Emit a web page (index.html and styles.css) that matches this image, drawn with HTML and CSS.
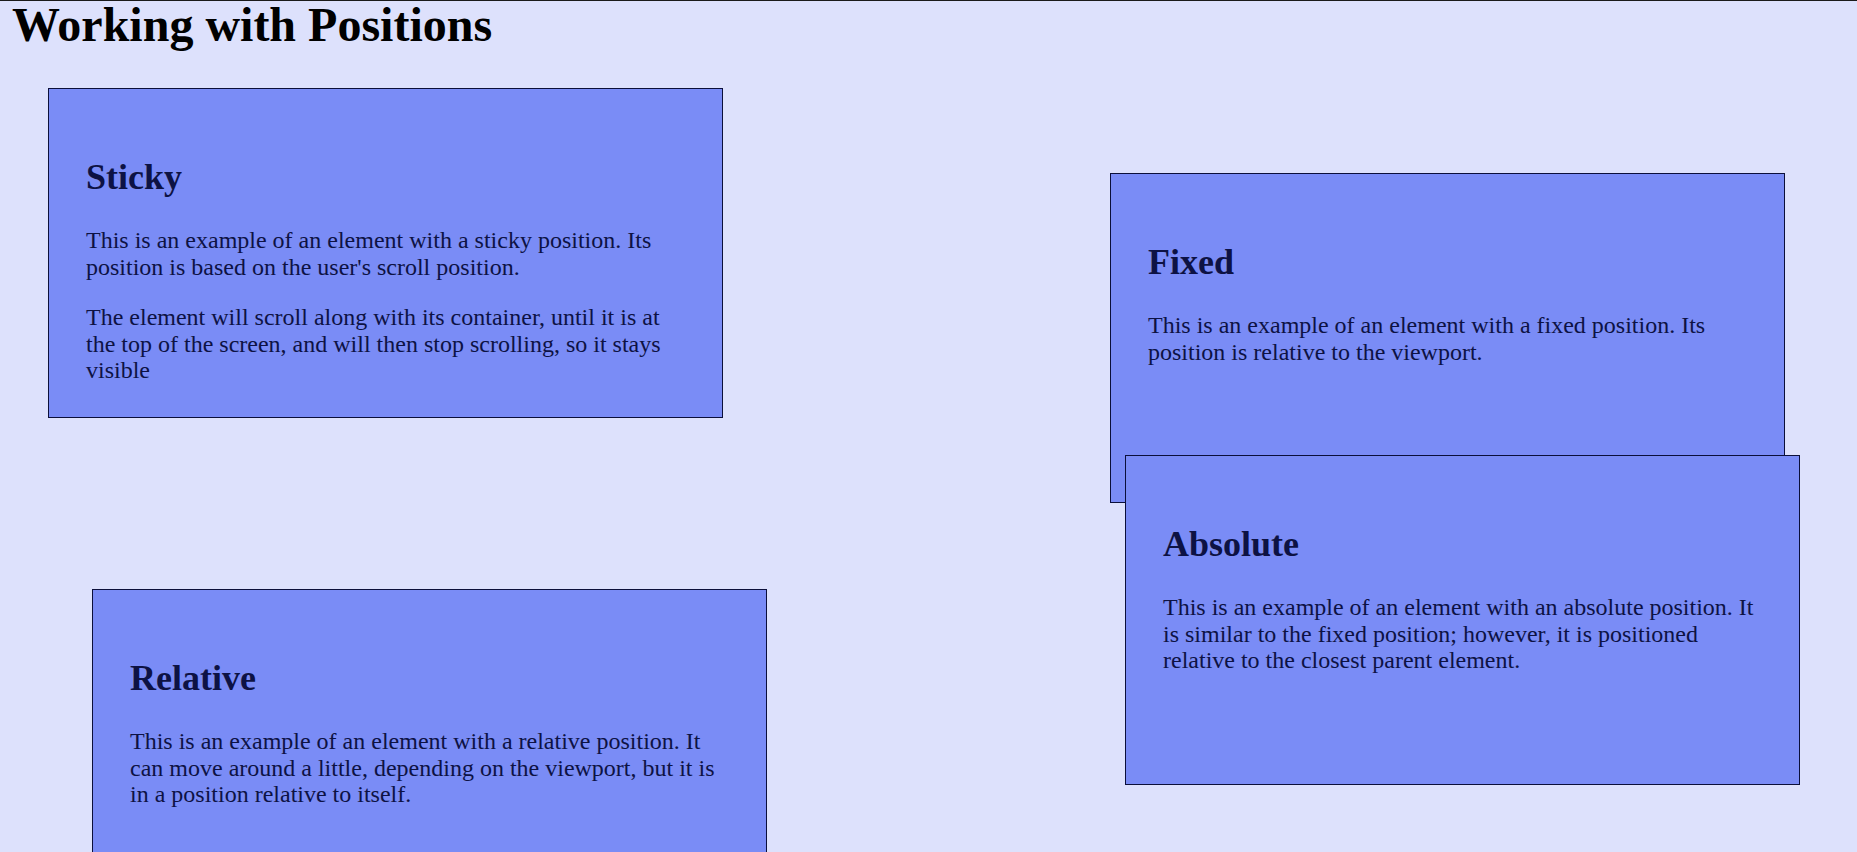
FILE: index.html
```html
<!DOCTYPE html>
<html lang="en">
<head>
<meta charset="UTF-8" />
<meta name="viewport" content="width=device-width, initial-scale=1" />
<title>Working with Positions</title>
<link rel="stylesheet" href="styles.css">
</head>
<body>
  <h1>Working with Positions</h1>

  <div class="stage">
    <!-- left column: sticky + relative -->
    <div class="col-left">
      <div class="box sticky">
        <h2>Sticky</h2>
        <p>This is an example of an element with a sticky position. Its position is based on the user's scroll position.</p>
        <p>The element will scroll along with its container, until it is at the top of the screen, and will then stop scrolling, so it stays visible</p>
      </div>

      <div class="box relative">
        <h2>Relative</h2>
        <p>This is an example of an element with a relative position. It can move around a little, depending on the viewport, but it is in a position relative to itself.</p>
      </div>
    </div>

    <!-- right column: fixed + absolute (overlapping) -->
    <div class="col-right">
      <div class="box fixed">
        <h2>Fixed</h2>
        <p>This is an example of an element with a fixed position. Its position is relative to the viewport.</p>
      </div>

      <div class="box absolute">
        <h2>Absolute</h2>
        <p>This is an example of an element with an absolute position. It is similar to the fixed position; however, it is positioned relative to the closest parent element.</p>
      </div>
    </div>
  </div>
</body>
</html>
```

FILE: styles.css
```css
html { background: #dde1fc; border-top: 1px solid #1a1a1a; }
body { margin: 0 12px; padding-bottom: 700px; font-family: "Liberation Serif", "Times New Roman", serif; color: #000; }
h1 { font-size: 48px; line-height: 48px; margin: 0; font-weight: 700; }

.stage { display: flex; align-items: flex-start; padding-left: 36px; }
.col-left { width: 719px; }
.col-right { width: 690px; margin-left: 343px; }

.box { box-sizing: border-box; width: 675px; height: 330px; padding: 38px 37px 37px; background: #7a8cf6; border: 1px solid #0b0f3a; color: #0d1244; }
.box h2 { font-size: 36px; line-height: 40px; margin: 30px 0; font-weight: 700; }
.box p { font-size: 24px; line-height: 26.6px; margin: 24px 0; }

.sticky { position: sticky; top: 0; margin-top: 39px; }
.relative { margin: 171px 0 0 44px; }
.fixed { margin-top: 124px; }
.absolute { position: relative; margin: -48px 0 0 15px; }
```
